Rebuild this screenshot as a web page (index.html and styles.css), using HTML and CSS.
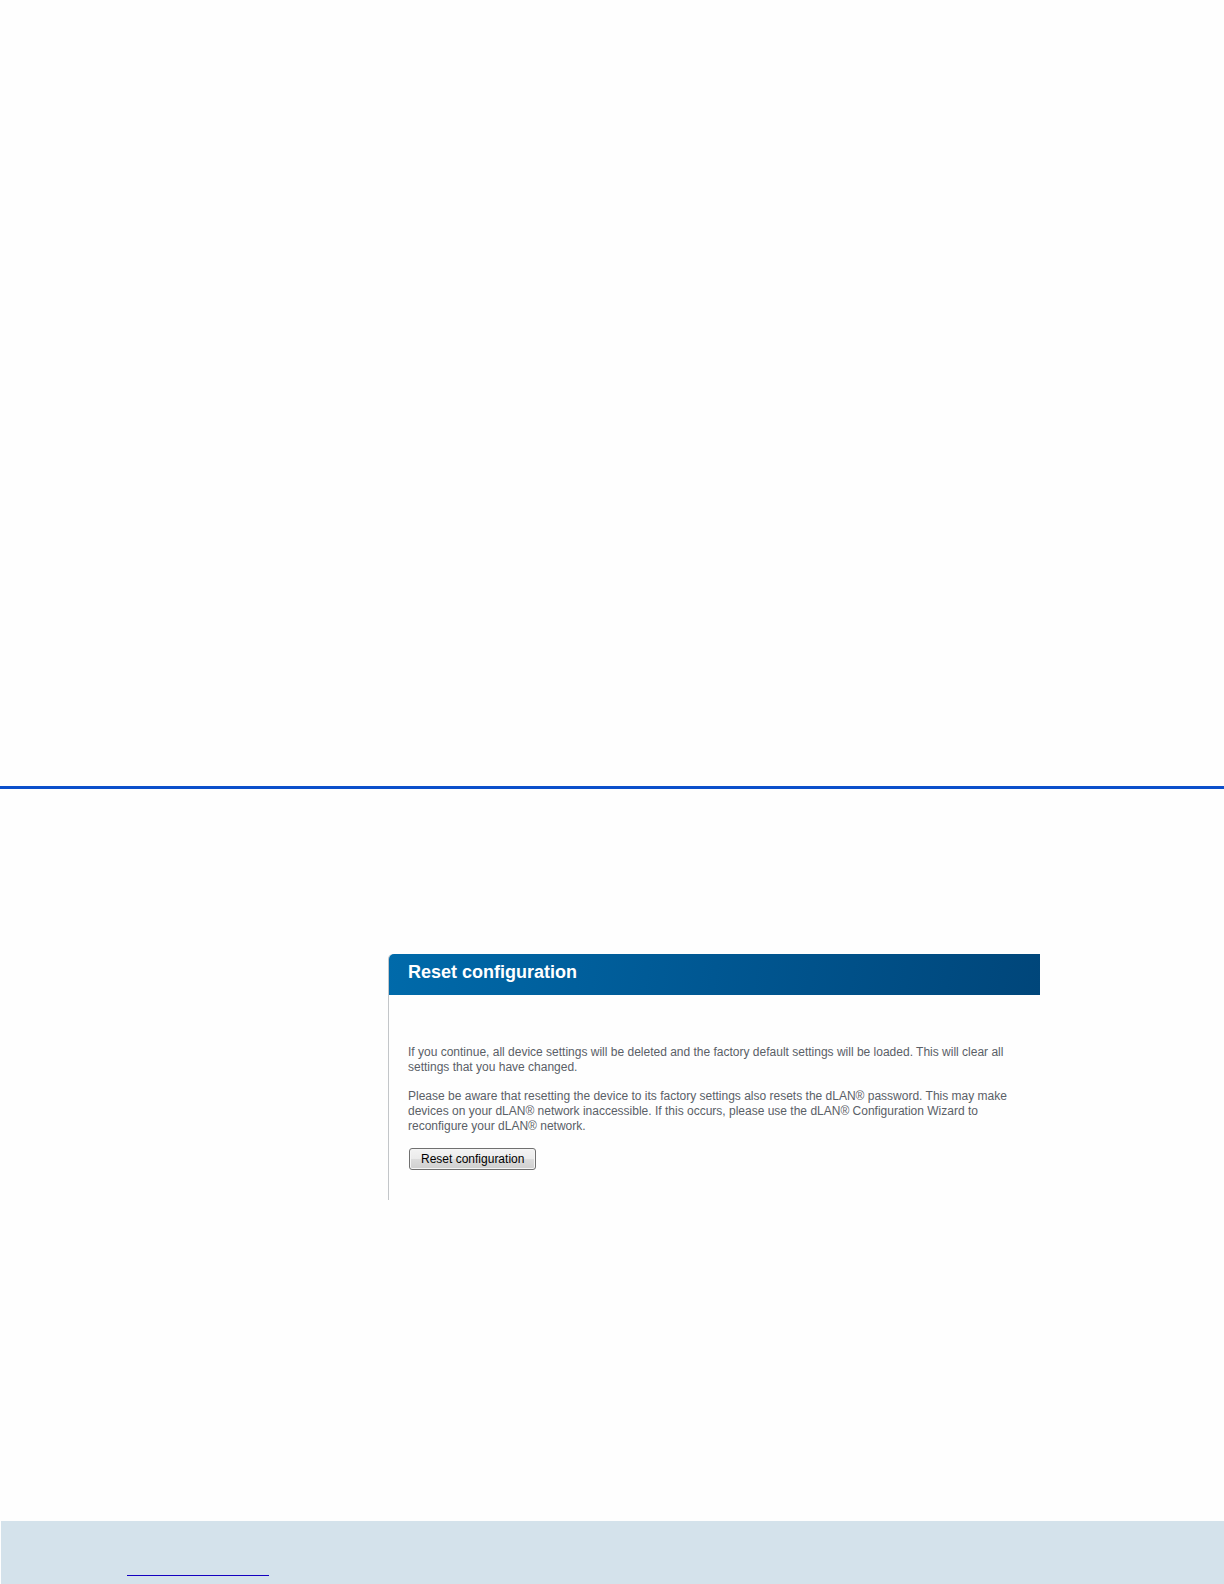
FILE: index.html
```
<!DOCTYPE html>
<html lang="en">
<head>
    <meta charset="UTF-8">
    <meta name="viewport" content="width=device-width, initial-scale=1.0">
    <title>Reset configuration</title>
    <link rel="stylesheet" href="styles.css">
</head>
<body>
    <header class="page-header"></header>

    <main class="content">
        <section class="panel">
            <h1 class="panel-title">Reset configuration</h1>
            <form class="panel-body">
                <p>If you continue, all device settings will be deleted and the factory default settings will be loaded. This will clear all settings that you have changed.</p>
                <p>Please be aware that resetting the device to its factory settings also resets the dLAN® password. This may make devices on your dLAN® network inaccessible. If this occurs, please use the dLAN® Configuration Wizard to reconfigure your dLAN® network.</p>
                <button type="submit" class="reset-btn">Reset configuration</button>
            </form>
        </section>
    </main>

    <footer class="page-footer">
        <div class="footer-line"></div>
    </footer>
</body>
</html>
```

FILE: styles.css
```
* {
    box-sizing: border-box;
}

body {
    display: flex;
    flex-direction: column;
    min-height: 100vh;
    margin: 0;
    background-color: #fefefe;
    color: #5a6067;
    font-family: "Liberation Sans", Arial, sans-serif;
    font-size: 12px;
    line-height: 15px;
}

.page-header {
    flex: 1;
    border-bottom: 3px solid #0b4fcb;
}

.content {
    padding: 165px 184px 321px 388px;
}

.panel {
    border-left: 1px solid #c3c6c9;
    border-top-left-radius: 5px;
}

.panel-title {
    margin: 0;
    padding: 7px 19px 12px;
    border-radius: 5px 0 0 0;
    background: linear-gradient(100deg, #006aaa, #005792 50%, #00467a);
    color: #fff;
    font-size: 18px;
    line-height: 22px;
}

.panel-body {
    padding: 50px 20px 30px 19px;
}

.panel-body p {
    margin: 0 0 14px;
}

.reset-btn {
    display: block;
    height: 22px;
    margin-left: 1px;
    padding: 0 11px;
    border: 1px solid #707070;
    border-radius: 3px;
    background: linear-gradient(#f3f3f3, #ebebeb 50%, #dcdcdc 50%, #cfcfcf);
    box-shadow: inset 0 0 0 1px #f5f5f5;
    color: #000;
    font-family: inherit;
    font-size: 12px;
    line-height: 15px;
    cursor: pointer;
}

.page-footer {
    margin-left: 1px;
    padding: 54px 126px 8px;
    background-color: #d4e2eb;
}

.footer-line {
    width: 142px;
    height: 1px;
    background-color: #1400c0;
}
```
